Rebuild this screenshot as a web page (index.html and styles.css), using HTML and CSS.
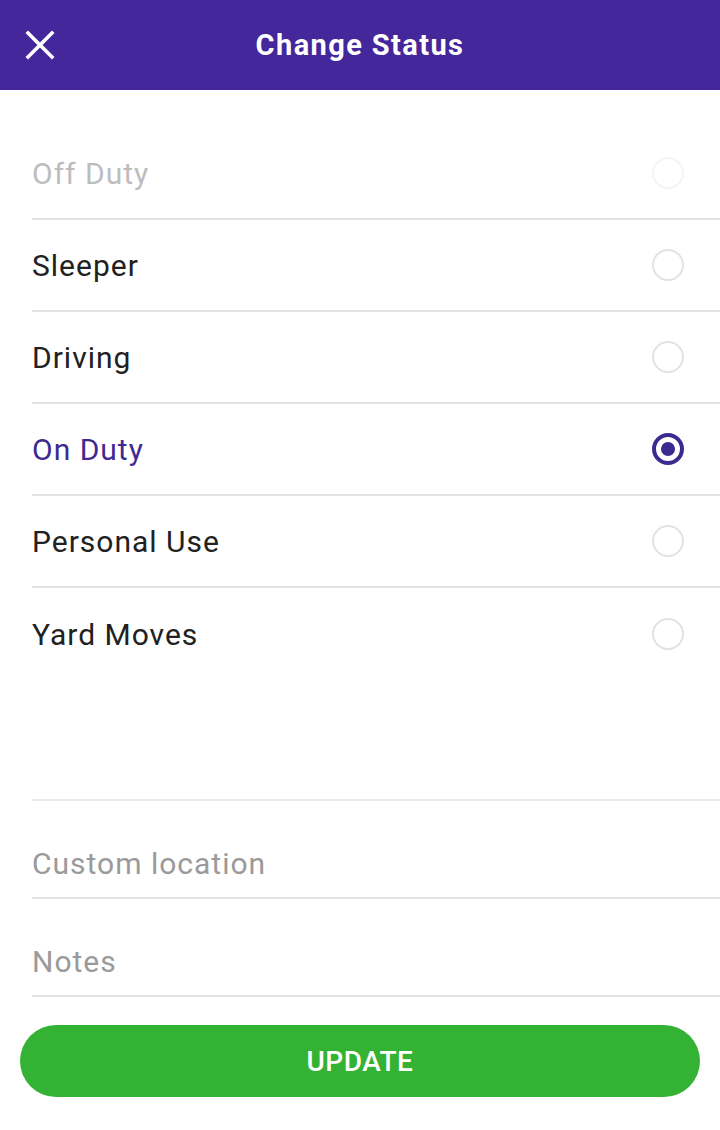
FILE: index.html
```html
<!DOCTYPE html>
<html>
<head>
<meta charset="utf-8">
<link rel="stylesheet" href="styles.css">
</head>
<body>
<header class="topbar">
  <button class="close" aria-label="Close">
    <svg width="32" height="32" viewBox="0 0 32 32"><path d="M4 4 L28 28 M28 4 L4 28" stroke="#fff" stroke-width="3.6" stroke-linecap="square" fill="none"/></svg>
  </button>
  <h1 class="title">Change Status</h1>
</header>
<main class="content">
  <ul class="statuses">
    <li class="row disabled"><span>Off Duty</span><span class="radio"></span></li>
    <li class="row"><span>Sleeper</span><span class="radio"></span></li>
    <li class="row"><span>Driving</span><span class="radio"></span></li>
    <li class="row selected"><span>On Duty</span><span class="radio on"></span></li>
    <li class="row"><span>Personal Use</span><span class="radio"></span></li>
    <li class="row last"><span>Yard Moves</span><span class="radio"></span></li>
  </ul>
  <div class="fields">
    <div class="field">Custom location</div>
    <div class="field">Notes</div>
  </div>
  <div class="actions">
    <button class="update">UPDATE</button>
  </div>
</main>
</body>
</html>
```
FILE: styles.css
```css
* { box-sizing: border-box; }
html, body { margin: 0; padding: 0; background: #fff; }
body { font-family: Roboto, "Noto Sans", sans-serif; width: 720px; height: 1130px; overflow: hidden; }

.topbar {
  height: 90px;
  background: #43279b;
  display: flex;
  align-items: center;
  justify-content: center;
  position: relative;
}
.close {
  position: absolute;
  left: 24px;
  top: 29px;
  background: none;
  border: 0;
  padding: 0;
  width: 32px;
  height: 32px;
  display: flex;
}
.title {
  margin: 0;
  color: #fff;
  font-size: 29px;
  font-weight: 700;
  letter-spacing: 1.4px;
}

.statuses {
  list-style: none;
  margin: 0;
  padding: 38px 0 0 32px;
}
.row {
  height: 92px;
  display: flex;
  align-items: center;
  justify-content: space-between;
  padding-right: 36px;
  border-bottom: 2px solid #e3e3e3;
  font-size: 30px;
  color: #212121;
  letter-spacing: 1px;
}
.row span:first-child { padding-top: 1px; }
.row.last { border-bottom: 0; }
.row.disabled { color: #bdbdbd; }
.row.selected { color: #3f2a8f; }

.radio {
  width: 32px;
  height: 32px;
  border: 2.5px solid #e2e2e2;
  border-radius: 50%;
  display: flex;
  align-items: center;
  justify-content: center;
}
.row.disabled .radio { border-color: #f4f4f4; }
.radio.on { border: 4px solid #3c2a90; }
.radio.on::after {
  content: "";
  width: 14px;
  height: 14px;
  border-radius: 50%;
  background: #3c2a90;
}

.fields {
  margin-top: 119px;
  padding-left: 32px;
}
.fields::before {
  content: "";
  display: block;
  height: 2px;
  background: #e9e9e9;
}
.field {
  height: 98px;
  display: flex;
  align-items: center;
  font-size: 30px;
  letter-spacing: 1px;
  color: #9a9a9a;
  border-bottom: 2px solid #e3e3e3;
  padding-top: 28px;
}

.actions {
  padding: 28px 20px 0 20px;
}
.update {
  width: 100%;
  height: 72px;
  border: 0;
  border-radius: 36px;
  background: #34b233;
  color: #fff;
  font-family: Roboto, sans-serif;
  font-size: 28px;
  font-weight: 500;
  letter-spacing: 0.5px;
}
```
